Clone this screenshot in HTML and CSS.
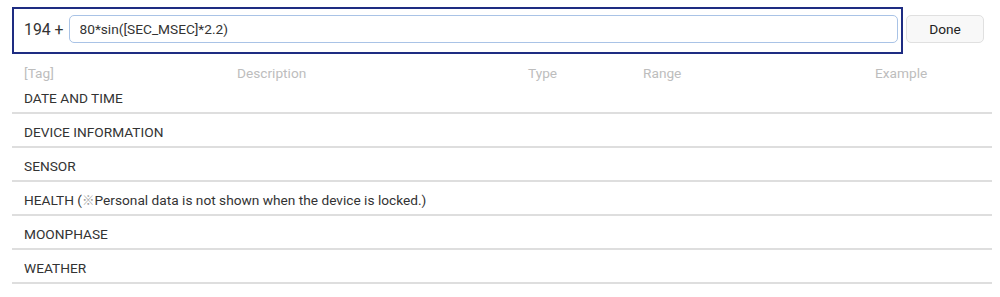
FILE: index.html
```html
<!DOCTYPE html>
<html lang="en">

<head>
    <meta charset="UTF-8">
    <title>Tag editor</title>
    <link rel="stylesheet" href="styles.css">
</head>

<body>
<div class="page">

    <div class="top-bar">
        <div class="expr-box">
            <span class="expr-label">194 +</span>
            <input type="text" class="expr-input" value="80*sin([SEC_MSEC]*2.2)">
        </div>
        <button class="done-btn">Done</button>
    </div>

    <div class="tag-table">
        <div class="tag-head">
            <span>[Tag]</span>
            <span>Description</span>
            <span>Type</span>
            <span>Range</span>
            <span>Example</span>
        </div>
        <div class="tag-group">DATE AND TIME</div>
        <div class="tag-group">DEVICE INFORMATION</div>
        <div class="tag-group">SENSOR</div>
        <div class="tag-group">HEALTH (<span class="note-mark">※</span>Personal data is not shown when the device is locked.)</div>
        <div class="tag-group">MOONPHASE</div>
        <div class="tag-group">WEATHER</div>
    </div>

</div>
</body>

</html>
```

FILE: styles.css
```css
body {
    margin: 0;
    background-color: white;
    font-family: Roboto, "Noto Sans", sans-serif;
    color: #333;
}

.page {
    padding: 7px 8px 0 12px;
}

.top-bar {
    display: flex;
    align-items: flex-start;
}

.expr-box {
    width: 891px;
    box-sizing: border-box;
    border: 2px solid #1e2c82;
    padding: 6px 3px 9px 10px;
    display: flex;
    align-items: center;
}

.expr-label {
    font-size: 15.8px;
    color: #333;
    margin-right: 5px;
    white-space: nowrap;
}

.expr-input {
    flex: 1;
    height: 28px;
    box-sizing: border-box;
    border: 1px solid #a9c3e6;
    border-radius: 5px;
    padding: 0 10px;
    font-family: Roboto, sans-serif;
    font-size: 13.7px;
    color: #333;
    outline: none;
}

.done-btn {
    margin-left: 3px;
    margin-top: 8px;
    width: 78px;
    height: 28px;
    border: 1px solid #e0e0e0;
    border-radius: 5px;
    background-color: #f8f8f8;
    font-family: Roboto, sans-serif;
    font-size: 13.7px;
    color: #222;
}

.tag-table {
    width: 980px;
    font-size: 13.7px;
}

.tag-head {
    display: grid;
    grid-template-columns: 213px 291px 115px 232px 1fr;
    padding: 13px 0 1px 12px;
    line-height: 12px;
    color: #bdbdbd;
}

.tag-group {
    padding: 4px 0 0 12px;
    line-height: 28px;
    border-bottom: 2px solid #dedede;
    color: #333;
}

.note-mark {
    color: #a0a0a0;
    font-family: "Noto Sans CJK JP", sans-serif;
    font-size: 12.5px;
}
```
